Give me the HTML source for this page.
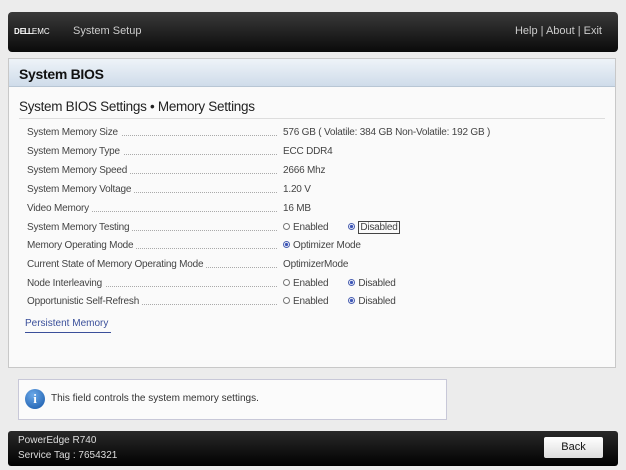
<!DOCTYPE html>
<html><head><meta charset="utf-8"><style>
*{margin:0;padding:0;box-sizing:border-box}
body{width:626px;height:470px;background:#ececec;font-family:"Liberation Sans",sans-serif;position:relative;overflow:hidden;color:#333;white-space:nowrap}
.hdr{position:absolute;left:8px;top:12px;width:610px;height:40px;border-radius:4px;background:linear-gradient(#3a3a3a,#0a0a0a);color:#ccc}
.panel{position:absolute;left:8px;top:58px;width:608px;height:310px;background:#fafafa;border:1px solid #c8c8c8}
.bt{height:28px;background:linear-gradient(#eef3f8,#cfdcea);border-bottom:1px solid #b8c6d4;font-weight:bold;font-size:14px;color:#111;padding:7px 0 0 10px;letter-spacing:-0.3px}
.sub{position:absolute;left:10px;top:40px;font-size:13.5px;color:#222;letter-spacing:-0.3px}
.line{position:absolute;left:10px;right:10px;top:59px;border-top:1px solid #ddd}
.row{position:absolute;left:18px;width:580px;font-size:10px;color:#444;height:14px;letter-spacing:-0.2px}
.row .l{position:absolute;left:0;top:0;background:#fafafa;padding-right:3px;z-index:1}
.row .d{position:absolute;left:0;width:250px;top:8px;border-top:1px dotted #aaa}
.row .v{position:absolute;left:256px;top:0}
.r{display:inline-block;width:7px;height:7px;border:1px solid #777;border-radius:50%;margin-right:3px;vertical-align:0;background:#fff}
.r.on{border-color:#4a5fb0;background:radial-gradient(#3d56b8 40%,#fff 55%)}
.info{position:absolute;left:18px;top:379px;width:429px;height:41px;background:#fbfbfb;border:1px solid #c8c8d8}
.ftr{position:absolute;left:8px;top:431px;width:610px;height:35px;border-radius:3px;background:linear-gradient(#2a2a2a,#000);color:#ddd;font-size:10px}
</style></head><body>
<div class="hdr">
<div style="position:absolute;left:6px;top:15px;font-size:8px;font-weight:bold;color:#fff">D<span style="letter-spacing:-1px">ELL</span><span style="font-weight:normal">EMC</span></div>
<div style="position:absolute;left:65px;top:13px;font-size:11px">System Setup</div>
<div style="position:absolute;right:16px;top:13px;font-size:11px">Help | About | Exit</div>
</div>
<div class="panel">
<div class="bt">System BIOS</div>
<div class="sub">System BIOS Settings • Memory Settings</div>
<div class="line"></div>
<div class="row" style="top:68px"><span class="l">System Memory Size</span><span class="d"></span><span class="v">576 GB ( Volatile: 384 GB Non-Volatile: 192 GB )</span></div>
<div class="row" style="top:87px"><span class="l">System Memory Type</span><span class="d"></span><span class="v">ECC DDR4</span></div>
<div class="row" style="top:106px"><span class="l">System Memory Speed</span><span class="d"></span><span class="v">2666 Mhz</span></div>
<div class="row" style="top:125px"><span class="l">System Memory Voltage</span><span class="d"></span><span class="v">1.20 V</span></div>
<div class="row" style="top:144px"><span class="l">Video Memory</span><span class="d"></span><span class="v">16 MB</span></div>
<div class="row" style="top:163px"><span class="l">System Memory Testing</span><span class="d"></span><span class="v"><i class="r"></i>Enabled<span style="display:inline-block;width:20px"></span><i class="r on"></i><span style="border:1px solid #444;padding:0 1px">Disabled</span></span></div>
<div class="row" style="top:181px"><span class="l">Memory Operating Mode</span><span class="d"></span><span class="v"><i class="r on"></i>Optimizer Mode</span></div>
<div class="row" style="top:200px"><span class="l">Current State of Memory Operating Mode</span><span class="d"></span><span class="v">OptimizerMode</span></div>
<div class="row" style="top:219px"><span class="l">Node Interleaving</span><span class="d"></span><span class="v"><i class="r"></i>Enabled<span style="display:inline-block;width:20px"></span><i class="r on"></i>Disabled</span></div>
<div class="row" style="top:237px"><span class="l">Opportunistic Self-Refresh</span><span class="d"></span><span class="v"><i class="r"></i>Enabled<span style="display:inline-block;width:20px"></span><i class="r on"></i>Disabled</span></div>
<div style="position:absolute;left:16px;top:259px;font-size:10px;color:#3a4f9a;border-bottom:1px solid #3a4f9a;padding:0 0 3px 0;width:86px">Persistent Memory</div>
</div>
<div class="info">
<div style="position:absolute;left:6px;top:9px;width:20px;height:20px;border-radius:50%;background:radial-gradient(circle at 40% 30%,#6aa8e8,#1456a8);color:#fff;font:bold 13px 'Liberation Serif',serif;text-align:center;line-height:20px">i</div>
<div style="position:absolute;left:32px;top:13px;font-size:10px;color:#333">This field controls the system memory settings.</div>
</div>
<div class="ftr">
<div style="position:absolute;left:10px;top:4px">PowerEdge R740</div>
<div style="position:absolute;left:10px;top:19px">Service Tag : 7654321</div>
<div style="position:absolute;left:536px;top:6px;width:59px;height:21px;background:linear-gradient(#fff,#ddd);border-radius:2px;color:#111;font-size:11px;text-align:center;line-height:21px">Back</div>
</div>
</body></html>
